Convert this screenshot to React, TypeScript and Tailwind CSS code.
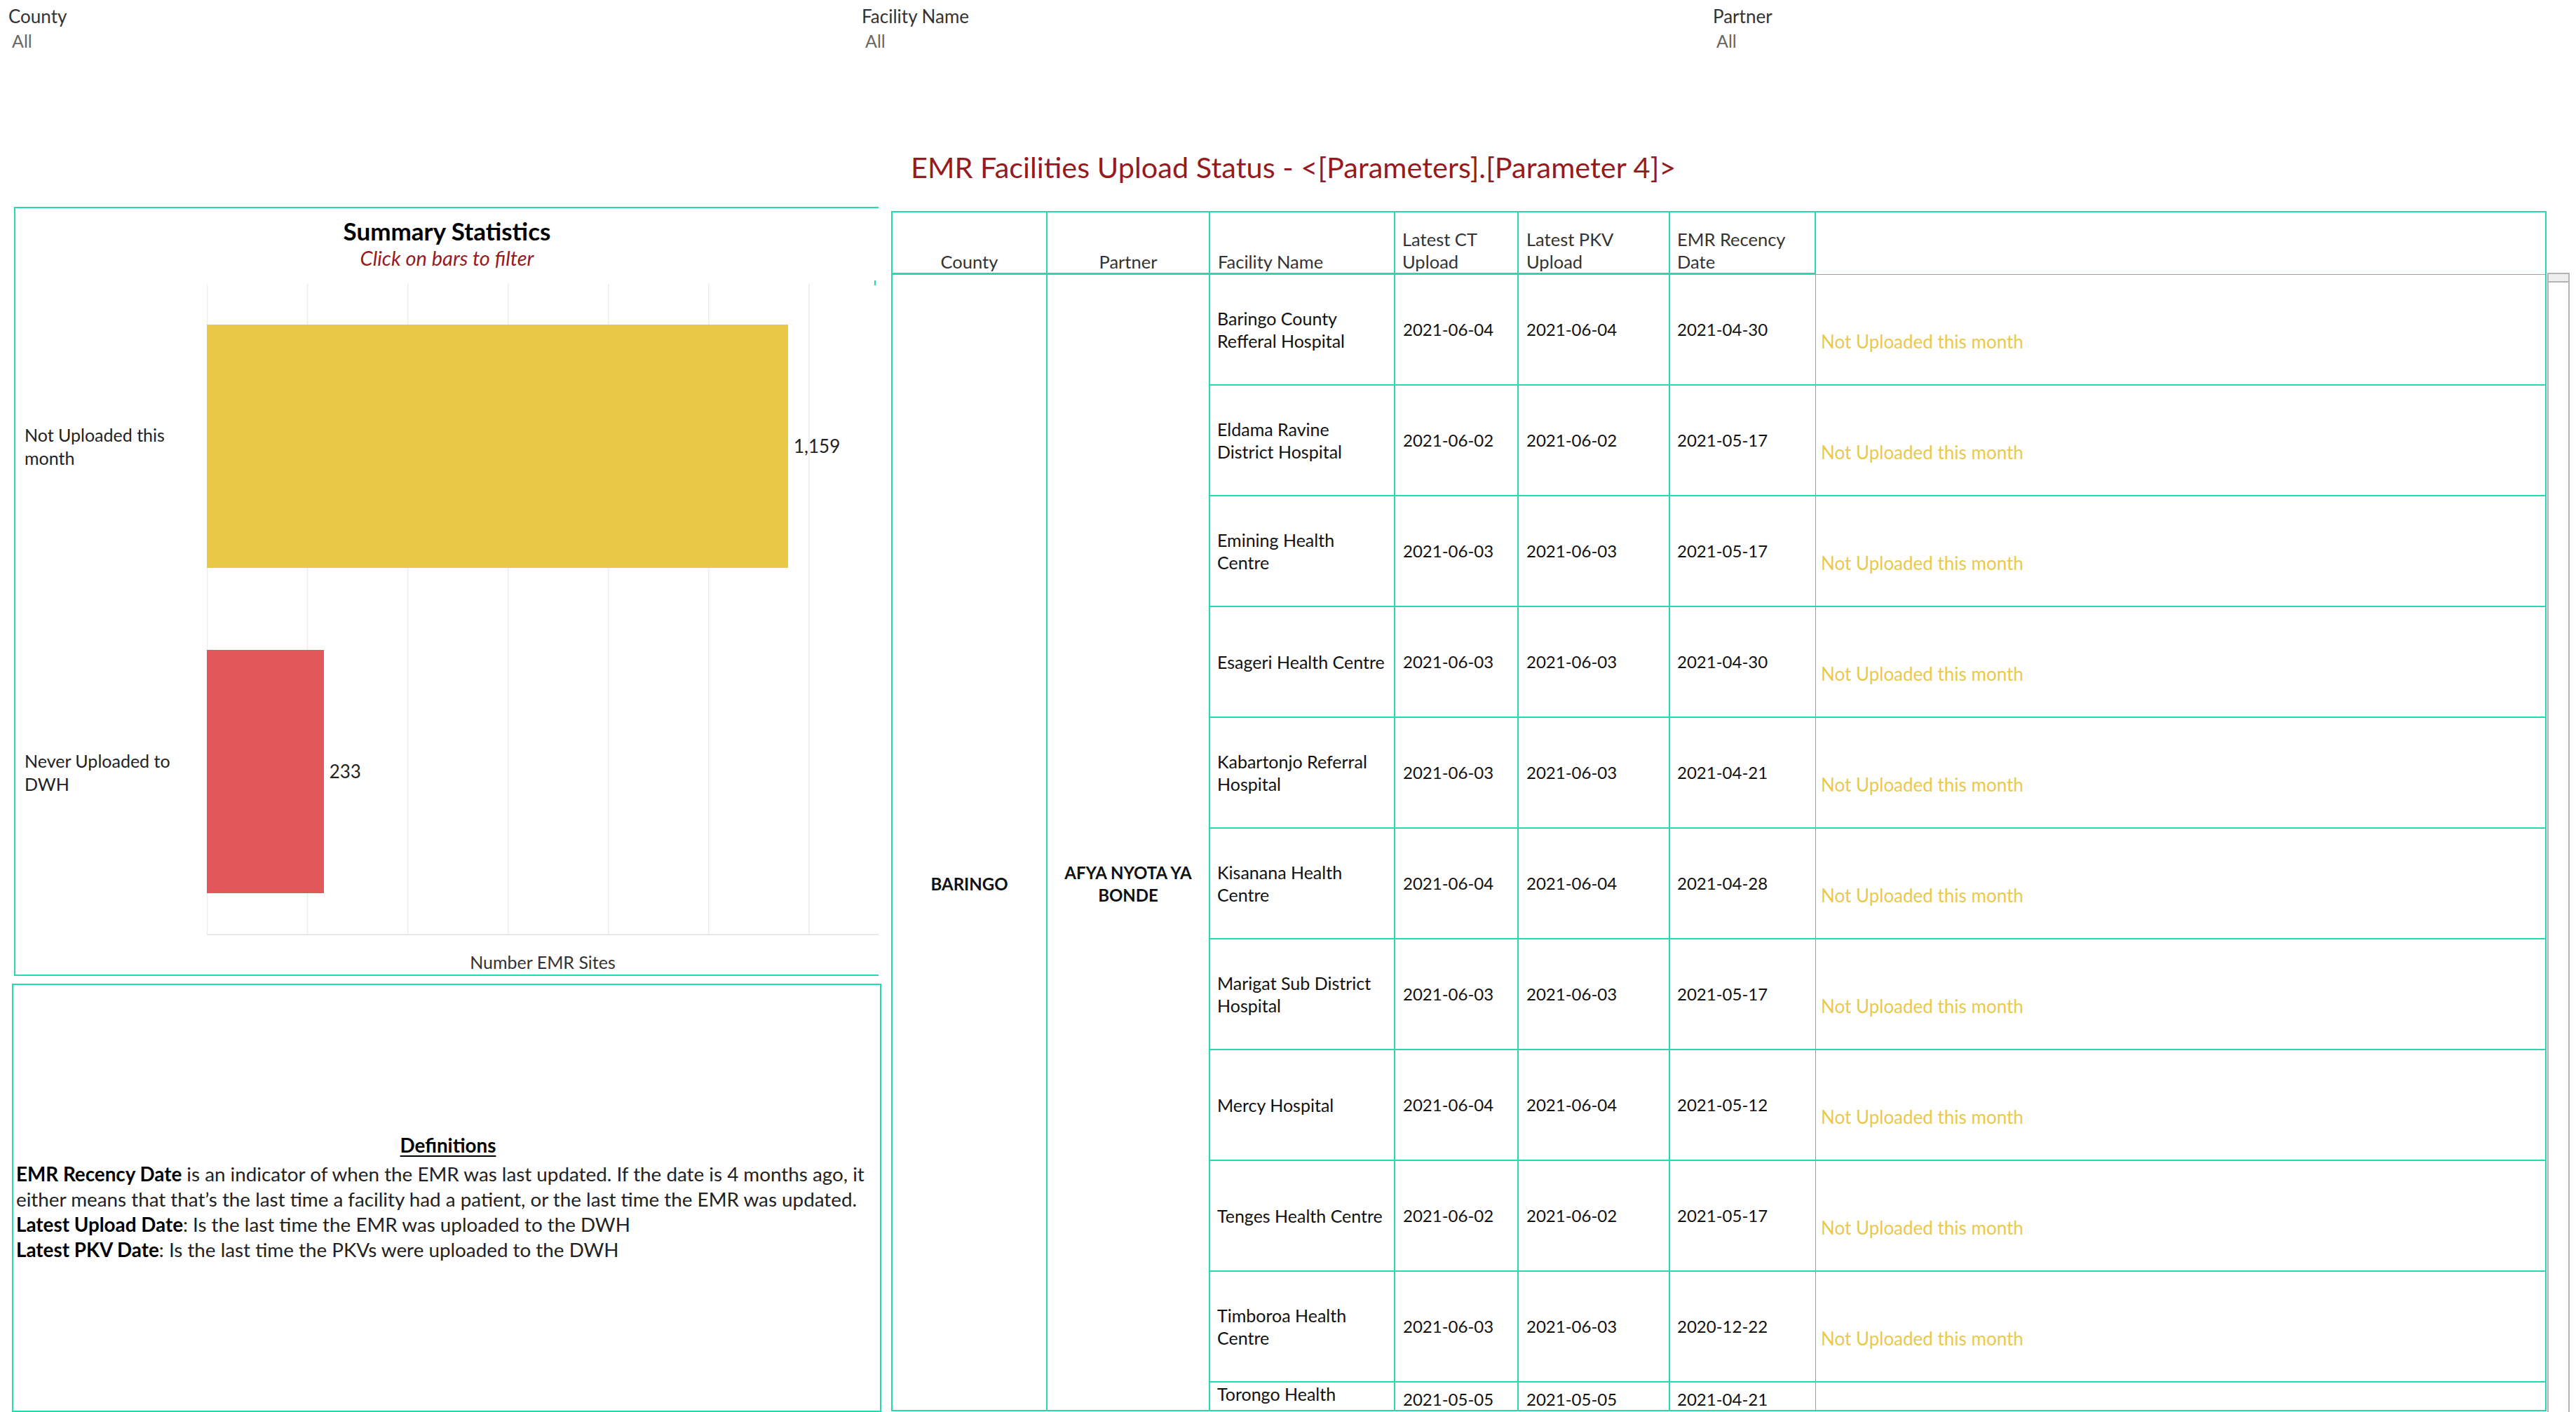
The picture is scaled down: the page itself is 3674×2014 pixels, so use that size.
import React from 'react';

const rows = [
  { name: ['Baringo County', 'Refferal Hospital'], ct: '2021-06-04', pkv: '2021-06-04', emr: '2021-04-30' },
  { name: ['Eldama Ravine', 'District Hospital'], ct: '2021-06-02', pkv: '2021-06-02', emr: '2021-05-17' },
  { name: ['Emining Health', 'Centre'], ct: '2021-06-03', pkv: '2021-06-03', emr: '2021-05-17' },
  { name: ['Esageri Health Centre'], ct: '2021-06-03', pkv: '2021-06-03', emr: '2021-04-30' },
  { name: ['Kabartonjo Referral', 'Hospital'], ct: '2021-06-03', pkv: '2021-06-03', emr: '2021-04-21' },
  { name: ['Kisanana Health', 'Centre'], ct: '2021-06-04', pkv: '2021-06-04', emr: '2021-04-28' },
  { name: ['Marigat Sub District', 'Hospital'], ct: '2021-06-03', pkv: '2021-06-03', emr: '2021-05-17' },
  { name: ['Mercy Hospital'], ct: '2021-06-04', pkv: '2021-06-04', emr: '2021-05-12' },
  { name: ['Tenges Health Centre'], ct: '2021-06-02', pkv: '2021-06-02', emr: '2021-05-17' },
  { name: ['Timboroa Health', 'Centre'], ct: '2021-06-03', pkv: '2021-06-03', emr: '2020-12-22' },
];

const bars = [
  { label: ['Not Uploaded this', 'month'], value: 1159, text: '1,159', color: 'bg-[#ebc948]' },
  { label: ['Never Uploaded to', 'DWH'], value: 233, text: '233', color: 'bg-[#e1575a]' },
];

// px per site on the x axis
const SCALE = 829 / 1159;

function Filter({ label, width }: { label: string; width: string }) {
  return (
    <div className={`${width} pt-[8px]`}>
      <div className="text-[26px] leading-[30px] text-[#333]">{label}</div>
      <div className="mt-[5px] pl-[5px] text-[25px] leading-[30px] text-[#666]">All</div>
    </div>
  );
}

function SummaryPanel() {
  return (
    <div className="relative ml-[3px] w-[1233px] h-[1097px] border-t-2 border-l-2 border-b-2 border-[#24dab0] flex flex-col">
      <div className="absolute left-[1225px] top-[103px] w-[2px] h-[7px] bg-[#24dab0]" />
      <div className="pt-[12px] text-center">
        <div className="text-[35px] leading-[40px] font-bold text-black">Summary Statistics</div>
        <div className="mt-[1px] text-[29px] leading-[36px] italic text-[#961b1f]">Click on bars to filter</div>
      </div>
      <div className="mt-[19px] flex">
        <div className="w-[273px] flex flex-col pl-[13px]">
          {bars.map((b) => (
            <div key={b.text} className="flex-1 flex items-center text-[25px] leading-[33px] text-[#222]">
              <div>
                {b.label[0]}
                <br />
                {b.label[1]}
              </div>
            </div>
          ))}
        </div>
        <div className="relative w-[958px] h-[929px] border-b-2 border-[#e8e8e8] flex flex-col">
          <svg className="absolute inset-0" width="958" height="927">
            {[0, 1, 2, 3, 4, 5, 6].map((i) => (
              <line key={i} x1={i * 200 * SCALE + 0.5} x2={i * 200 * SCALE + 0.5} y1="0" y2="927" stroke="#ececec" strokeWidth="1.5" />
            ))}
          </svg>
          {bars.map((b) => (
            <div key={b.text} className="relative flex-1 flex items-center">
              <div className={`h-[347px] ${b.color}`} style={{ width: b.value * SCALE }} />
              <div className="ml-[8px] text-[26px] text-[#222]">{b.text}</div>
            </div>
          ))}
        </div>
      </div>
      <div className="flex">
        <div className="w-[273px]" />
        <div className="w-[958px] mt-[22px] text-center text-[25px] leading-[32px] text-[#333]">Number EMR Sites</div>
      </div>
    </div>
  );
}

function Definitions() {
  return (
    <div className="mt-[11px] w-[1240px] h-[611px] border-2 border-[#24dab0] flex flex-col justify-center pl-[4px] text-[27.8px] leading-[36px] text-[#222]">
      <div className="mb-[5px] text-center font-bold text-black underline underline-offset-4">Definitions</div>
      <div className="whitespace-nowrap">
        <b className="text-black">EMR Recency Date</b> is an indicator of when the EMR was last updated. If the date is 4 months ago, it
      </div>
      <div className="whitespace-nowrap">
        either means that that’s the last time a facility had a patient, or the last time the EMR was updated.
      </div>
      <div className="whitespace-nowrap">
        <b className="text-black">Latest Upload Date</b>: Is the last time the EMR was uploaded to the DWH
      </div>
      <div className="whitespace-nowrap">
        <b className="text-black">Latest PKV Date</b>: Is the last time the PKVs were uploaded to the DWH
      </div>
    </div>
  );
}

function HeaderCell({ children, className }: { children: React.ReactNode; className: string }) {
  return (
    <div className={`h-[89px] flex items-end text-[25.5px] leading-[32px] text-[#333] ${className}`}>
      <div>{children}</div>
    </div>
  );
}

function UploadTable() {
  return (
    <div className="w-[2361px] h-[1712px] border-2 border-[#24dab0] overflow-hidden flex flex-col">
      <div className="flex">
        <HeaderCell className="w-[221px] justify-center border-r-2 border-b-[3px] border-[#24dab0]">County</HeaderCell>
        <HeaderCell className="w-[232px] justify-center border-r-2 border-b-[3px] border-[#24dab0]">Partner</HeaderCell>
        <HeaderCell className="w-[264px] pl-[11px] border-r-2 border-b-[3px] border-[#24dab0]">Facility Name</HeaderCell>
        <HeaderCell className="w-[176px] pl-[10px] border-r-2 border-b-[3px] border-[#24dab0]">
          Latest CT
          <br />
          Upload
        </HeaderCell>
        <HeaderCell className="w-[216px] pl-[11px] border-r-2 border-b-[3px] border-[#24dab0]">
          Latest PKV
          <br />
          Upload
        </HeaderCell>
        <HeaderCell className="w-[208px] pl-[10px] border-r-2 border-b-[3px] border-[#24dab0]">
          EMR Recency
          <br />
          Date
        </HeaderCell>
        <div className="w-[1040px] h-[89px] border-b border-[#24dab0]" />
      </div>
      <div className="flex h-[1619px] overflow-hidden items-start">
        <div className="w-[221px] h-[1738px] flex-none flex items-center justify-center border-r-2 border-[#24dab0] text-[24px] font-bold text-[#111]">
          BARINGO
        </div>
        <div className="w-[232px] h-[1738px] flex-none flex items-center justify-center text-center border-r-2 border-[#24dab0] text-[24px] leading-[32px] font-bold text-[#111]">
          <div>
            AFYA NYOTA YA
            <br />
            BONDE
          </div>
        </div>
        <div className="w-[1904px] flex flex-col text-[24px] leading-[32px] text-[#111]">
          {rows.map((r) => (
            <div key={r.name.join(' ')} className="h-[158px] flex border-b-2 border-[#24dab0]">
              <div className="w-[264px] pl-[10px] flex items-center border-r-2 border-[#24dab0] text-[25px]">
                <div>
                  {r.name.map((n, i) => (
                    <div key={i}>{n}</div>
                  ))}
                </div>
              </div>
              <div className="w-[176px] pl-[11px] flex items-center border-r-2 border-[#24dab0]">{r.ct}</div>
              <div className="w-[216px] pl-[11px] flex items-center border-r-2 border-[#24dab0]">{r.pkv}</div>
              <div className="w-[207px] pl-[10px] flex items-center">{r.emr}</div>
              <div className="w-[1041px] pl-[7px] pt-[33px] flex items-center border-l border-[#24dab0] text-[26px] text-[#ebc948]">
                Not Uploaded this month
              </div>
            </div>
          ))}
          <div className="h-[39px] flex">
            <div className="w-[264px] pl-[10px] border-r-2 border-[#24dab0] text-[25px]">Torongo Health</div>
            <div className="w-[176px] pl-[11px] pt-[8px] border-r-2 border-[#24dab0]">2021-05-05</div>
            <div className="w-[216px] pl-[11px] pt-[8px] border-r-2 border-[#24dab0]">2021-05-05</div>
            <div className="w-[207px] pl-[10px] pt-[8px]">2021-04-21</div>
            <div className="w-[1041px] border-l border-[#24dab0]" />
          </div>
        </div>
      </div>
    </div>
  );
}

export default function App() {
  return (
    <div className="w-[3674px] h-[2014px] overflow-hidden bg-white font-['Lato',sans-serif]">
      <div className="flex h-[200px] pl-[12px]">
        <Filter label="County" width="w-[1217px]" />
        <Filter label="Facility Name" width="w-[1214px]" />
        <Filter label="Partner" width="w-[1200px]" />
      </div>
      <div className="flex items-start">
        <div className="ml-[17px] w-[1240px] mt-[95px]">
          <SummaryPanel />
          <Definitions />
        </div>
        <div className="ml-[14px] w-[2394px]">
          <div className="h-[101px] pl-[28px] pt-[14px] text-[41.5px] leading-[48px] text-[#961b1f]">
            EMR Facilities Upload Status - &lt;[Parameters].[Parameter 4]&gt;
          </div>
          <div className="flex">
            <UploadTable />
            <div className="ml-[1px] mt-[88px] w-[32px] h-[1625px] border-x-2 border-t-2 border-[#b4b4b4]">
              <div className="h-[12px] bg-[#eeeeee] border-b-2 border-[#b4b4b4]" />
            </div>
          </div>
        </div>
      </div>
    </div>
  );
}
